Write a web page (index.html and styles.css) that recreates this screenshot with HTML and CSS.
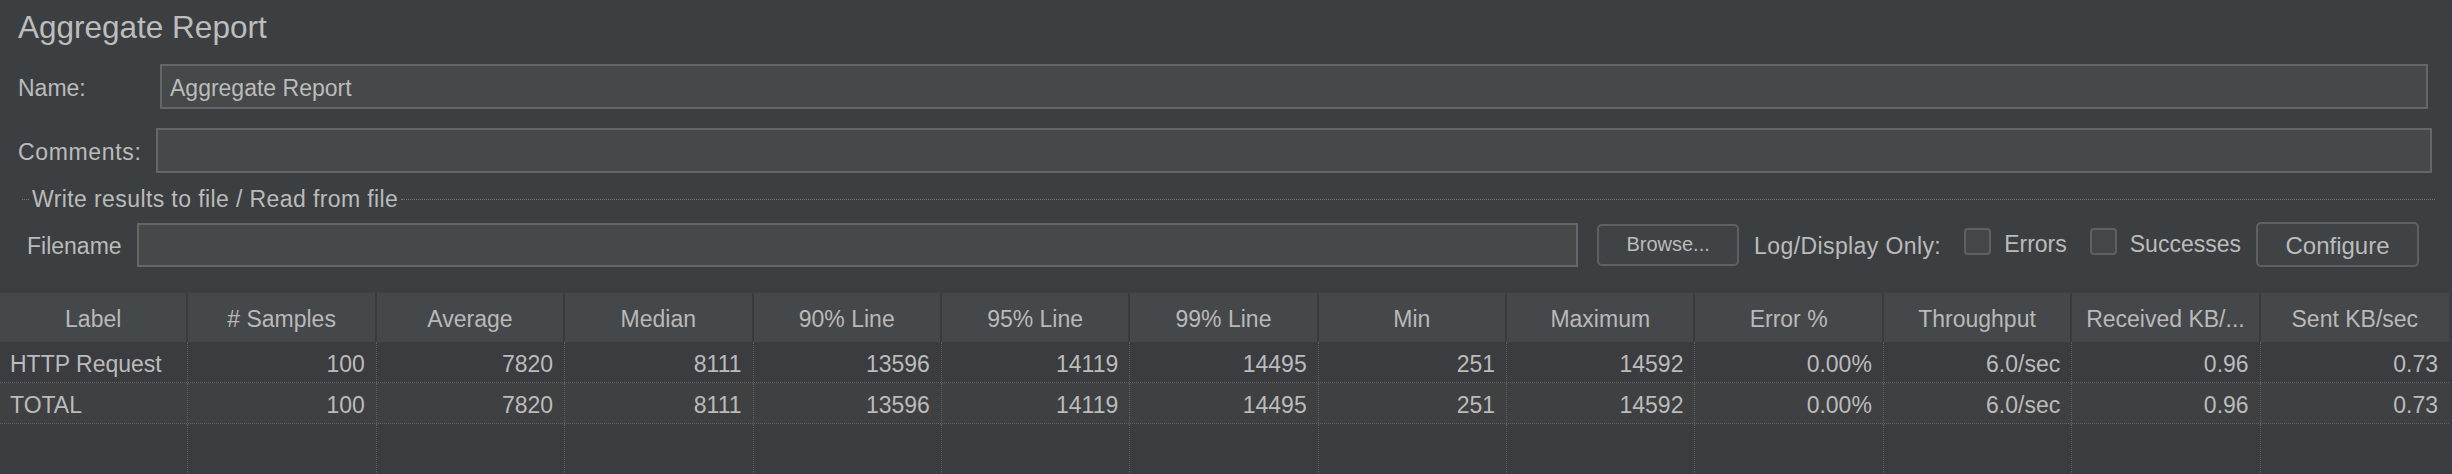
FILE: index.html
```html
<!DOCTYPE html>
<html lang="en">
<head>
<meta charset="utf-8">
<title>Aggregate Report</title>
<link rel="stylesheet" href="styles.css">
</head>
<body>
<div class="panel">
  <h1 class="title">Aggregate Report</h1>
  <div class="row row-name">
    <span class="lbl lbl-name">Name:</span>
    <div class="field field-name">Aggregate Report</div>
  </div>
  <div class="row row-comments">
    <span class="lbl lbl-comments">Comments:</span>
    <div class="field field-comments">&nbsp;</div>
  </div>
  <div class="group">
    <div class="legend">
      <span class="rule rule-short"></span>
      <span class="legend-text">Write results to file / Read from file</span>
      <span class="rule rule-long"></span>
    </div>
    <div class="file-row">
      <span class="lbl lbl-file">Filename</span>
      <div class="field field-file">&nbsp;</div>
      <button class="btn btn-browse" type="button">Browse...</button>
      <span class="lbl lbl-log">Log/Display Only:</span>
      <span class="check"></span>
      <span class="lbl lbl-check">Errors</span>
      <span class="check check-2"></span>
      <span class="lbl lbl-check">Successes</span>
      <button class="btn btn-config" type="button">Configure</button>
    </div>
  </div>
</div>

<div class="table">
  <div class="tr thead">
    <div class="th">Label</div>
    <div class="th"># Samples</div>
    <div class="th">Average</div>
    <div class="th">Median</div>
    <div class="th">90% Line</div>
    <div class="th">95% Line</div>
    <div class="th">99% Line</div>
    <div class="th">Min</div>
    <div class="th">Maximum</div>
    <div class="th">Error %</div>
    <div class="th">Throughput</div>
    <div class="th">Received KB/...</div>
    <div class="th">Sent KB/sec</div>
  </div>
  <div class="tr trow">
    <div class="td td-label">HTTP Request</div>
    <div class="td">100</div>
    <div class="td">7820</div>
    <div class="td">8111</div>
    <div class="td">13596</div>
    <div class="td">14119</div>
    <div class="td">14495</div>
    <div class="td">251</div>
    <div class="td">14592</div>
    <div class="td">0.00%</div>
    <div class="td">6.0/sec</div>
    <div class="td">0.96</div>
    <div class="td">0.73</div>
  </div>
  <div class="tr trow trow-total">
    <div class="td td-label">TOTAL</div>
    <div class="td">100</div>
    <div class="td">7820</div>
    <div class="td">8111</div>
    <div class="td">13596</div>
    <div class="td">14119</div>
    <div class="td">14495</div>
    <div class="td">251</div>
    <div class="td">14592</div>
    <div class="td">0.00%</div>
    <div class="td">6.0/sec</div>
    <div class="td">0.96</div>
    <div class="td">0.73</div>
  </div>
  <div class="tr tfill">
    <div class="tf"></div><div class="tf"></div><div class="tf"></div><div class="tf"></div>
    <div class="tf"></div><div class="tf"></div><div class="tf"></div><div class="tf"></div>
    <div class="tf"></div><div class="tf"></div><div class="tf"></div><div class="tf"></div>
    <div class="tf"></div>
  </div>
</div>
</body>
</html>
```

FILE: styles.css
```css
html, body {
  margin: 0;
  padding: 0;
  background: #3c3f41;
  overflow: hidden;
}

body {
  width: 2452px;
  height: 474px;
  font-family: "Liberation Sans", Arial, sans-serif;
  color: #bbbbbb;
}

.panel {
  padding: 9px 0 0 18px;
}

.title {
  margin: 0;
  font-size: 31.5px;
  font-weight: normal;
  line-height: 36px;
  color: #bdbdbd;
}

.row {
  display: flex;
  align-items: baseline;
}

.lbl {
  font-size: 23px;
  white-space: nowrap;
}

.row-name {
  margin-top: 19px;
  margin-right: 24px;
}

.row-comments {
  margin-top: 19px;
  margin-right: 20px;
}

.lbl-name {
  width: 142px;
  flex: none;
}

.lbl-comments {
  width: 138px;
  flex: none;
  letter-spacing: 0.65px;
}

.field {
  flex: 1;
  box-sizing: border-box;
  height: 45px;
  border: 2px solid #646668;
  background: #45494a;
  font-size: 23px;
  line-height: 37px;
  padding: 4px 8px 0;
  color: #bbbbbb;
}

.legend {
  display: flex;
  align-items: center;
  height: 26px;
  margin: 13px 17px 0 4px;
}

.rule {
  border-top: 1px dotted #74777a;
  height: 0;
}

.rule-short {
  width: 7px;
  flex: none;
}

.rule-long {
  flex: 1;
}

.legend-text {
  font-size: 23px;
  line-height: 26px;
  letter-spacing: 0.4px;
  padding: 0 3px;
  white-space: nowrap;
}

.file-row {
  display: flex;
  align-items: center;
  height: 45px;
  margin-top: 10px;
  padding-left: 9px;
  margin-right: 33px;
}

.lbl-file {
  margin-right: 15px;
  padding-top: 4px;
}

.field-file {
  height: 44px;
}

.btn {
  box-sizing: border-box;
  font-family: "Liberation Sans", Arial, sans-serif;
  color: #bbbbbb;
  background: #404345;
  border: 2px solid #5e6163;
  border-radius: 5px;
  padding: 0;
  flex: none;
}

.btn-browse {
  width: 142px;
  height: 42px;
  font-size: 20px;
  margin-left: 19px;
}

.lbl-log {
  margin-left: 15px;
  padding-top: 4px;
  letter-spacing: 0.4px;
}

.check {
  box-sizing: border-box;
  width: 27px;
  height: 27px;
  border: 2px solid #5e6163;
  border-radius: 4px;
  background: #43474a;
  margin-left: 23px;
  margin-bottom: 6px;
  flex: none;
}

.check-2 {
  margin-left: 23px;
}

.lbl-check {
  margin-left: 13px;
}

.btn-config {
  width: 163px;
  height: 45px;
  font-size: 24px;
  margin-left: 15px;
  padding-top: 3px;
}

.table {
  width: 2449px;
  margin-top: 26px;
  background: #3a3c3f;
}

.tr {
  display: grid;
  grid-template-columns: repeat(13, 1fr);
}

.thead {
  background: #45484a;
  height: 49px;
}

.th {
  box-sizing: border-box;
  border-right: 2px solid #393b3d;
  text-align: center;
  font-size: 23px;
  line-height: 45px;
  padding-top: 4px;
  white-space: nowrap;
  overflow: hidden;
  color: #b9b9b9;
}

.th:last-child {
  border-right: none;
}

.trow {
  border-bottom: 1px dotted #5d6062;
}

.trow-total {
  background: #3e4042;
}

.td {
  box-sizing: border-box;
  height: 40px;
  border-right: 1px dotted #5d6062;
  text-align: right;
  font-size: 23px;
  line-height: 36px;
  padding: 4px 11px 0 10px;
  white-space: nowrap;
  overflow: hidden;
}

.td:last-child {
  border-right: none;
}

.td-label {
  text-align: left;
}

.tf {
  height: 60px;
  border-right: 1px dotted #5d6062;
}

.tf:last-child {
  border-right: none;
}
```
